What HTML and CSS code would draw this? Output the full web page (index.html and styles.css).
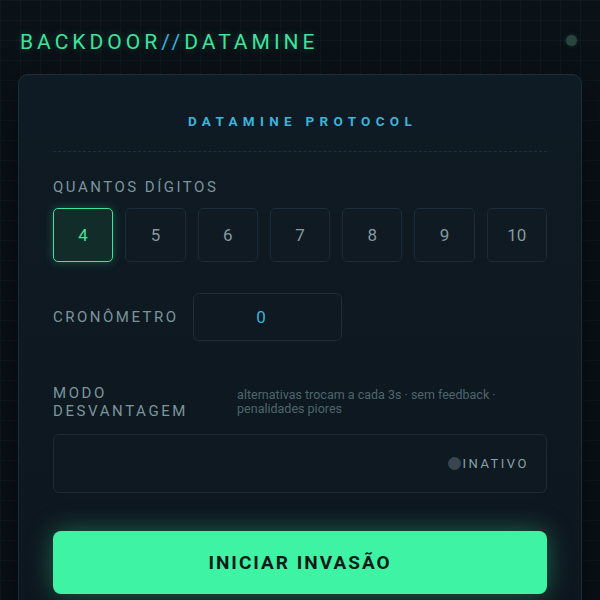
FILE: index.html
```html
<!DOCTYPE html>
<html lang="pt">
<head>
<meta charset="utf-8">
<title>Backdoor//Datamine</title>
<link rel="stylesheet" href="styles.css">
</head>
<body>
<div class="page">
  <header class="topbar">
    <h1 class="logo">BACKDOOR<span class="slash">//</span>DATAMINE</h1>
    <span class="status-dot"></span>
  </header>
  <main class="card">
    <h2 class="card-title">DATAMINE PROTOCOL</h2>
    <hr class="divider">
    <section class="field">
      <div class="label">QUANTOS DÍGITOS</div>
      <div class="digits">
        <button class="digit active">4</button>
        <button class="digit">5</button>
        <button class="digit">6</button>
        <button class="digit">7</button>
        <button class="digit">8</button>
        <button class="digit">9</button>
        <button class="digit">10</button>
      </div>
    </section>
    <section class="timer-row">
      <div class="label">CRONÔMETRO</div>
      <div class="timer-box">0</div>
    </section>
    <section class="mode">
      <div class="mode-head">
        <div class="label mode-label">MODO<br>DESVANTAGEM</div>
        <div class="mode-desc">alternativas trocam a cada 3s · sem feedback · penalidades piores</div>
      </div>
      <div class="toggle-box">
        <span class="toggle-dot"></span>
        <span class="toggle-text">INATIVO</span>
      </div>
    </section>
    <button class="start">INICIAR INVASÃO</button>
  </main>
</div>
</body>
</html>
```

FILE: styles.css
```css
* { box-sizing: border-box; }
html, body {
  margin: 0;
  padding: 0;
  height: 100%;
}
body {
  font-family: Roboto, "Liberation Sans", sans-serif;
  background-color: #0a1117;
  background-image:
    linear-gradient(rgba(60, 120, 140, 0.07) 1px, transparent 1px),
    linear-gradient(90deg, rgba(60, 120, 140, 0.07) 1px, transparent 1px);
  background-size: 20px 20px;
  overflow: hidden;
}
.page {
  padding: 0 18px 0 18px;
}
.topbar {
  display: flex;
  align-items: center;
  justify-content: space-between;
  height: 74px;
  padding: 10px 2px 0 2px;
}
.logo {
  margin: 0;
  font-size: 21px;
  font-weight: 400;
  letter-spacing: 4px;
  color: #3fe39c;
  text-shadow: 0 0 8px rgba(63, 227, 156, 0.25);
}
.slash { color: #3ab0dc; }
.status-dot {
  width: 11px;
  height: 11px;
  border-radius: 50%;
  background: #27443d;
  margin-right: 3px;
  margin-top: -4px;
  box-shadow: 0 0 4px rgba(39, 68, 61, 0.6);
}
.card {
  background: linear-gradient(180deg, #0f1b24 0%, #0d161e 100%);
  border: 1px solid #1a2e3a;
  border-radius: 10px;
  padding: 38px 34px 40px 34px;
  box-shadow: 0 16px 40px rgba(0, 0, 0, 0.55);
}
.card-title {
  margin: 0;
  text-align: center;
  font-size: 13.5px;
  font-weight: 700;
  letter-spacing: 5.3px;
  color: #3bb3da;
  padding-left: 5px;
}
.divider {
  border: 0;
  border-top: 1px dashed #1d3240;
  margin: 22px 0 0 0;
}
.label {
  font-size: 15px;
  letter-spacing: 2.5px;
  color: #7a959b;
}
.field { margin-top: 26px; }
.digits {
  display: grid;
  grid-template-columns: repeat(7, 1fr);
  gap: 12px;
  margin-top: 12px;
}
.digit {
  height: 54px;
  border: 1px solid #1a2c38;
  border-radius: 5px;
  background: #0f1a22;
  color: #84999f;
  font-family: Roboto, "Liberation Sans", sans-serif;
  font-size: 17px;
  padding: 0;
}
.digit.active {
  border-color: #3fe39c;
  background: #122c29;
  color: #3fe39c;
  box-shadow: 0 0 10px rgba(63, 227, 156, 0.3);
}
.timer-row {
  display: flex;
  align-items: center;
  gap: 14px;
  margin-top: 31px;
}
.timer-box {
  width: 149px;
  height: 48px;
  border: 1px solid #1b2e3a;
  border-radius: 6px;
  background: #0e1921;
  color: #3bb3da;
  font-size: 17px;
  display: flex;
  align-items: center;
  justify-content: center;
  padding-right: 12px;
}
.mode { margin-top: 43px; }
.mode-head {
  display: flex;
  align-items: flex-start;
  gap: 49px;
}
.mode-label {
  line-height: 18px;
  letter-spacing: 2.6px;
}
.mode-desc {
  font-size: 12.5px;
  line-height: 14px;
  color: #4d666c;
  max-width: 260px;
  margin-top: 4px;
}
.toggle-box {
  margin-top: 14px;
  height: 59px;
  border: 1px solid #1a2c38;
  border-radius: 6px;
  background: #0e1921;
  display: flex;
  align-items: center;
  justify-content: flex-end;
  padding-right: 17px;
}
.toggle-dot {
  width: 13px;
  height: 13px;
  border-radius: 50%;
  background: #37464e;
}
.toggle-text {
  font-size: 13px;
  letter-spacing: 2.5px;
  color: #8aa1a7;
  margin-left: 1px;
}
.start {
  display: block;
  width: 100%;
  height: 63px;
  margin-top: 38px;
  border: 0;
  border-radius: 8px;
  background: #3ef4a4;
  color: #0d1c18;
  font-family: Roboto, "Liberation Sans", sans-serif;
  font-size: 19px;
  font-weight: 700;
  letter-spacing: 2px;
  box-shadow: 0 0 26px rgba(62, 244, 164, 0.35);
}
```
